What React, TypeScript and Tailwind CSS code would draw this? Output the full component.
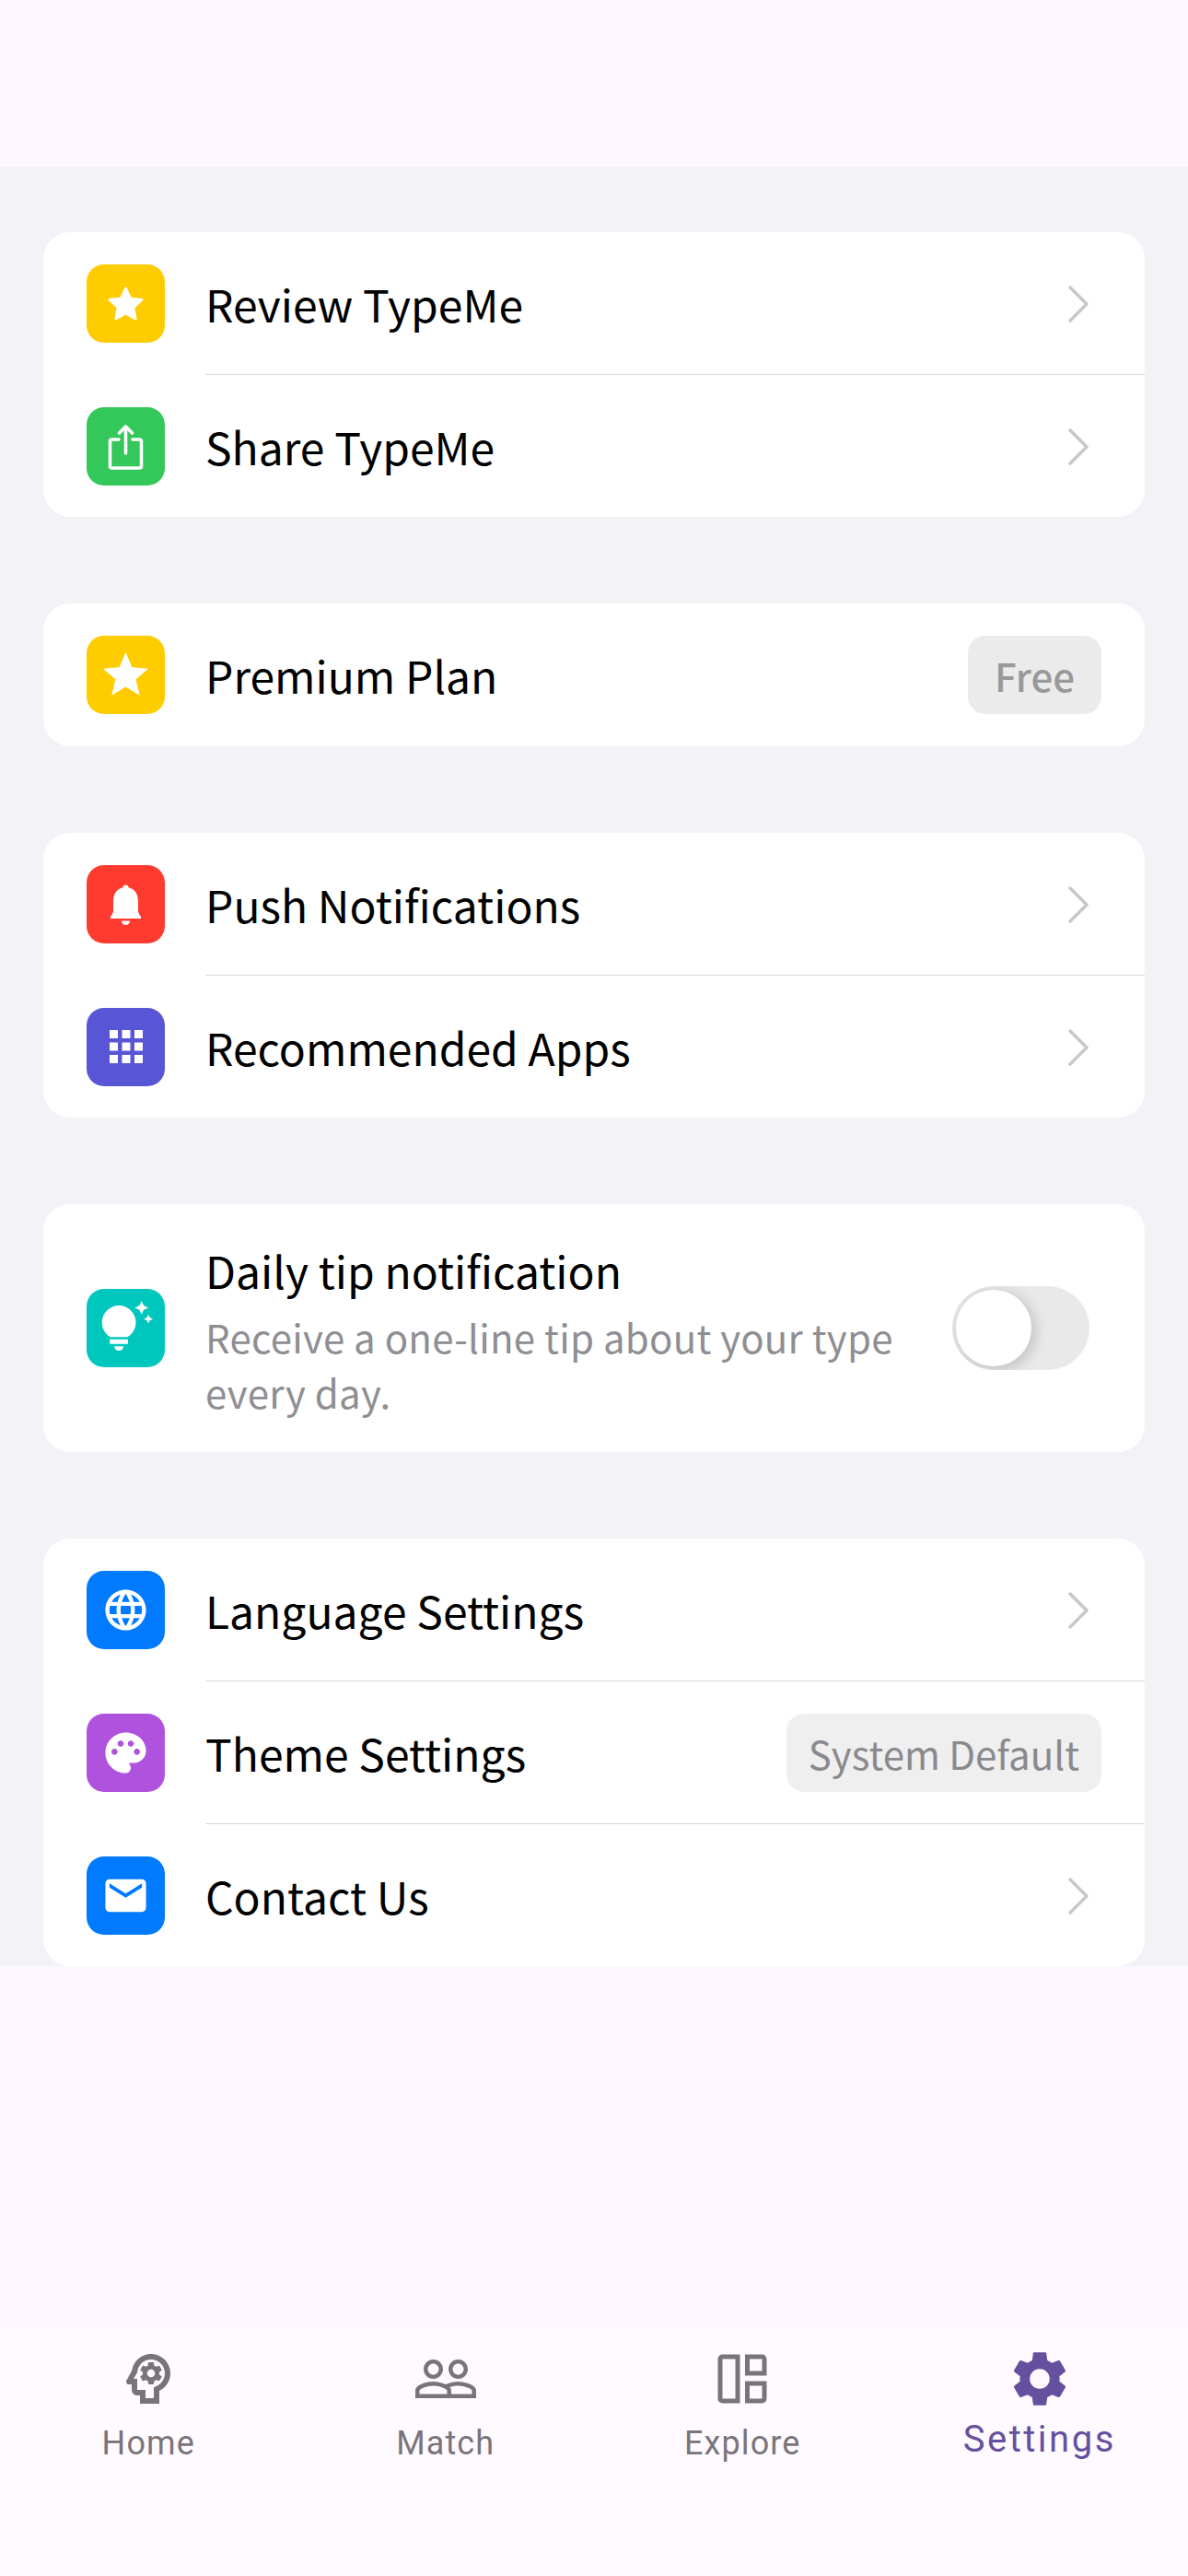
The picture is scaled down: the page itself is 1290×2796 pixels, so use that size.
import type { ReactNode } from "react";
import {
  MdApps,
  MdEmail,
  MdLanguage,
  MdOutlinePsychology,
  MdPalette,
  MdPeopleOutline,
  MdStar,
  MdTipsAndUpdates,
} from "react-icons/md";

const SANS = "font-['Noto_Sans_CJK_KR','Noto_Sans',sans-serif]";

function IconBox({ color, children }: { color: string; children: ReactNode }) {
  return (
    <div className={`flex h-[85px] w-[85px] shrink-0 items-center justify-center rounded-[19px] text-white ${color}`}>
      {children}
    </div>
  );
}

function Chevron() {
  return (
    <svg width="24" height="40" viewBox="0 0 24 40" fill="none" className="mr-[13px] mt-[2px] shrink-0">
      <path d="M3 2l18 18L3 38" stroke="#c7c7cc" strokeWidth="3.5" strokeLinecap="round" strokeLinejoin="round" />
    </svg>
  );
}

function Badge({ children, medium }: { children: ReactNode; medium?: boolean }) {
  return (
    <div
      className={`flex h-[85px] shrink-0 items-center rounded-[19px] text-[42px] ${
        medium ? "bg-[#ebebeb] px-[29px] font-medium text-[#999999]" : "bg-[#efefef] px-[24px] text-[#8a8a8e]"
      }`}
    >
      {children}
    </div>
  );
}

function RoundStar() {
  return (
    <svg width="43" height="43" viewBox="0 0 24 24" fill="currentColor" stroke="currentColor" strokeWidth="1.5" strokeLinejoin="round">
      <path d="M12 2.8l2.9 6.1 6.9.8-5.1 4.7 1.3 6.9-6-3.4-6 3.4 1.3-6.9-5.1-4.7 6.9-.8z" />
    </svg>
  );
}

function ShareIcon() {
  return (
    <svg width="85" height="85" viewBox="0 0 85 85" fill="none" stroke="currentColor" strokeWidth="3.6" strokeLinecap="round" strokeLinejoin="round">
      <path d="M35 35h-7.5a2 2 0 0 0-2 2v27a2 2 0 0 0 2 2h30a2 2 0 0 0 2-2V37a2 2 0 0 0-2-2H50" />
      <path d="M42.5 50V22M35.5 28l7-7 7 7" />
    </svg>
  );
}

function BellIcon() {
  return (
    <svg width="85" height="85" viewBox="0 0 85 85" fill="currentColor">
      <circle cx="42.5" cy="24.5" r="3" />
      <path d="M42.5 24c-8.5 0-13.5 6.5-13.5 15v10c0 3-1 5-3 6.5V58h33v-2.5c-2-1.5-3-3.5-3-6.5V39c0-8.5-5-15-13.5-15z" />
      <path d="M38 60.5h9c0 2.500-2 4.500-4.500 4.500S38 63 38 60.500z" />
    </svg>
  );
}

function Row({
  icon,
  label,
  right,
  divider,
}: {
  icon: ReactNode;
  label: string;
  right: ReactNode;
  divider?: boolean;
}) {
  return (
    <div className="relative flex h-[154px] items-center pl-[47px] pr-[47px]">
      {icon}
      <div className="ml-[44px] flex-1 text-[48px] leading-[60px] text-black">{label}</div>
      {right}
      {divider ? <div className="absolute bottom-[-1px] left-[176px] right-0 h-px bg-[#d8d8dc]" /> : null}
    </div>
  );
}

function Card({ children }: { children: ReactNode }) {
  return <div className="flex flex-col gap-px rounded-[29px] bg-white">{children}</div>;
}

function Tab({ icon, label, active }: { icon: ReactNode; label: string; active?: boolean }) {
  return (
    <div className={`flex flex-1 flex-col items-center pt-[19px] ${active ? "text-[#65509f]" : "text-[#79747a]"}`}>
      {icon}
      <div
        className={
          active
            ? "mt-[2px] text-[40px] leading-[56px] tracking-[2.5px]"
            : "mt-[9px] text-[36px] leading-[50px] tracking-[1.1px]"
        }
      >
        {label}
      </div>
    </div>
  );
}

export default function App() {
  return (
    <div className={`flex h-[2796px] w-[1290px] flex-col overflow-hidden bg-[#fef7ff] ${SANS}`}>
      <div className="h-[181px] shrink-0" />

      <main className="flex shrink-0 flex-col gap-[94px] bg-[#f2f2f7] px-[47px] pt-[71px]">
        <Card>
          <Row
            icon={<IconBox color="bg-[#ffcc00]"><RoundStar /></IconBox>}
            label="Review TypeMe"
            right={<Chevron />}
            divider
          />
          <Row
            icon={<IconBox color="bg-[#34c759]"><ShareIcon /></IconBox>}
            label="Share TypeMe"
            right={<Chevron />}
          />
        </Card>

        <Card>
          <div className="pb-px">
            <Row
              icon={<IconBox color="bg-[#ffcc00]"><MdStar size={59} /></IconBox>}
              label="Premium Plan"
              right={<Badge medium>Free</Badge>}
            />
          </div>
        </Card>

        <Card>
          <Row
            icon={<IconBox color="bg-[#ff3b30]"><BellIcon /></IconBox>}
            label="Push Notifications"
            right={<Chevron />}
            divider
          />
          <Row
            icon={<IconBox color="bg-[#5856d6]"><MdApps size={54} /></IconBox>}
            label="Recommended Apps"
            right={<Chevron />}
          />
        </Card>

        <Card>
          <div className="flex h-[269px] items-center pl-[47px] pr-[60px]">
            <IconBox color="bg-[#00c7be]"><MdTipsAndUpdates size={59} /></IconBox>
            <div className="ml-[44px] flex-1 pt-[5px]">
              <div className="text-[48px] leading-[60px] text-black">Daily tip notification</div>
              <div className="mt-[13px] w-[780px] text-[42px] leading-[60px] tracking-[0.25px] text-[#8e8e93]">
                Receive a one-line tip about your type every day.
              </div>
            </div>
            {/* switch, off state */}
            <div className="h-[91px] w-[149px] shrink-0 overflow-hidden rounded-full bg-[#e9e9ea] p-[4px]">
              <div className="h-[83px] w-[82px] rounded-full bg-white shadow-[3px_3px_16px_rgba(0,0,0,0.2)]" />
            </div>
          </div>
        </Card>

        <Card>
          <Row
            icon={<IconBox color="bg-[#007aff]"><MdLanguage size={53} /></IconBox>}
            label="Language Settings"
            right={<Chevron />}
            divider
          />
          <Row
            icon={<IconBox color="bg-[#af52de]"><MdPalette size={53} /></IconBox>}
            label="Theme Settings"
            right={<Badge>System Default</Badge>}
            divider
          />
          <Row
            icon={<IconBox color="bg-[#007aff]"><MdEmail size={53} /></IconBox>}
            label="Contact Us"
            right={<Chevron />}
          />
        </Card>
      </main>

      <div className="flex-1" />

      <nav className="flex h-[269px] shrink-0 bg-[#fffaff] font-['Roboto',sans-serif]">
        <Tab icon={<MdOutlinePsychology size={72} />} label="Home" />
        <Tab icon={<MdPeopleOutline size={72} />} label="Match" />
        <Tab
          icon={
            <svg width="72" height="72" viewBox="0 0 72 72" fill="none" stroke="currentColor" strokeWidth="5">
              <path d="M12 14.5a2.500 2.500 0 0 1 2.500-2.500H31v48H14.500a2.500 2.500 0 0 1-2.500-2.500z" />
              <path d="M41.500 12H57.500a2.500 2.500 0 0 1 2.500 2.500V30H41.500z" />
              <path d="M41.500 41H60v16.500a2.500 2.500 0 0 1-2.500 2.500H41.500z" />
            </svg>
          }
          label="Explore"
        />
        <Tab
          active
          icon={
            <svg width="72" height="72" viewBox="0 0 24 24" fill="currentColor">
              <path d="M19.14 12.94c.04-.3.06-.61.06-.94 0-.32-.02-.64-.07-.94l2.03-1.58c.18-.14.23-.41.12-.61l-1.92-3.32c-.12-.22-.37-.29-.59-.22l-2.39.96c-.5-.38-1.03-.7-1.62-.94l-.36-2.54c-.04-.24-.24-.41-.48-.41h-3.84c-.24 0-.43.17-.47.41l-.36 2.54c-.59.24-1.13.57-1.62.94l-2.39-.96c-.22-.08-.47 0-.59.22L2.74 8.87c-.12.21-.08.47.12.61l2.03 1.58c-.05.3-.09.63-.09.94s.02.64.07.94l-2.03 1.58c-.18.14-.23.41-.12.61l1.92 3.32c.12.22.37.29.59.22l2.39-.96c.5.38 1.03.7 1.62.94l.36 2.54c.05.24.24.41.48.41h3.84c.24 0 .44-.17.47-.41l.36-2.54c.59-.24 1.13-.56 1.62-.94l2.39.96c.22.08.47 0 .59-.22l1.92-3.32c.12-.22.07-.47-.12-.61l-2.01-1.58zM12 15.6c-1.98 0-3.6-1.62-3.6-3.6s1.62-3.6 3.6-3.6 3.6 1.62 3.6 3.6-1.62 3.6-3.6 3.6z" />
            </svg>
          }
          label="Settings"
        />
      </nav>
    </div>
  );
}
